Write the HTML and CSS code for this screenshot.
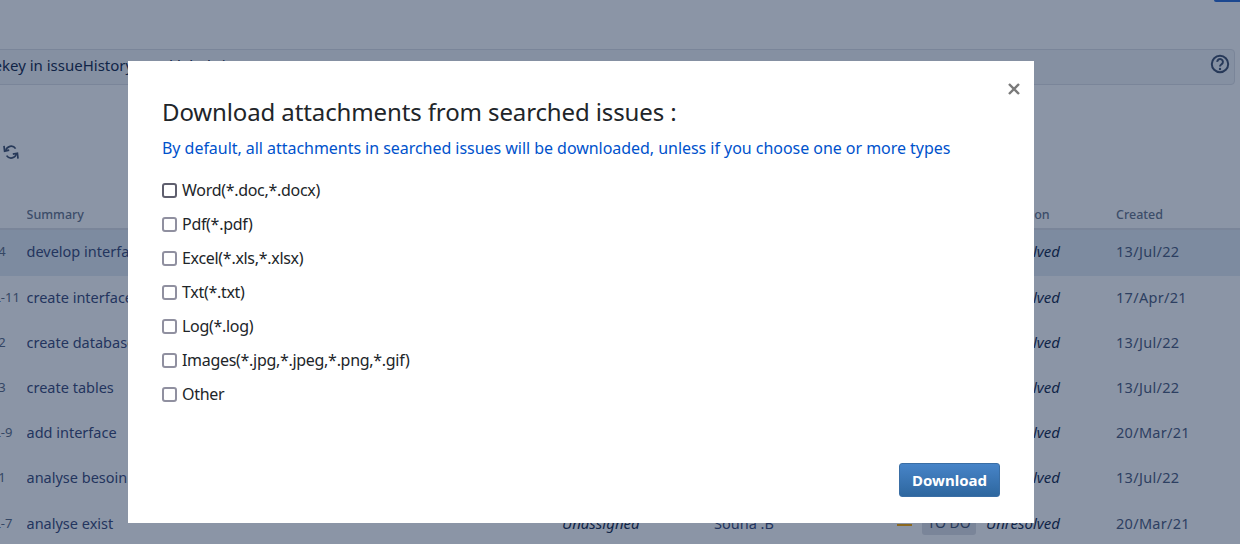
FILE: index.html
```html
<!DOCTYPE html>
<html lang="en">
<head>
<meta charset="utf-8">
<title>Issues</title>
<link rel="stylesheet" href="styles.css">
</head>
<body>
<main class="page">
  <div class="top-bar"><span class="top-button"></span></div>
  <div class="query">
    <span class="query-text">issuekey in issueHistory() and labels is not empty</span>
    <svg class="help" viewBox="0 0 20 20" width="20" height="20" aria-hidden="true">
      <circle cx="10" cy="10" r="8.2" fill="none" stroke="currentColor" stroke-width="2"/>
      <path d="M7.3 7.9a2.8 2.8 0 1 1 4.4 2.2c-1 .7-1.7 1.1-1.7 2.3" fill="none" stroke="currentColor" stroke-width="2"/>
      <circle cx="10" cy="15" r="1.2" fill="currentColor"/>
    </svg>
  </div>
  <div class="tools">
    <svg class="refresh" viewBox="0 0 16 16" width="16" height="16" aria-hidden="true">
      <path d="M2.8 6.6A5.4 5.4 0 0 1 12.6 4.6" fill="none" stroke="currentColor" stroke-width="1.7"/>
      <path d="M1 1.8l.6 5.4 4.6-1" fill="none" stroke="currentColor" stroke-width="1.7"/>
      <path d="M13.4 9.6A5.4 5.4 0 0 1 3.6 11.6" fill="none" stroke="currentColor" stroke-width="1.7"/>
      <path d="M15 14.6l-.6-5.4-4.6 1" fill="none" stroke="currentColor" stroke-width="1.7"/>
    </svg>
  </div>
  <div class="table">
    <div class="row head"><span>Key</span><span>Summary</span><span>Assignee</span><span>Reporter</span><span>P</span><span>Status</span><span>Resolution</span><span>Created</span></div>
    <div class="row selected"><span class="key">SP-4</span><span>develop interface</span><i>Unassigned</i><span>Souna .B</span><span class="prio"></span><span class="status">TO DO</span><i>Unresolved</i><span class="date">13/Jul/22</span></div>
    <div class="row"><span class="key">SPL-11</span><span>create interface</span><i>Unassigned</i><span>Souna .B</span><span class="prio"></span><span class="status">TO DO</span><i>Unresolved</i><span class="date">17/Apr/21</span></div>
    <div class="row"><span class="key">SP-2</span><span>create database</span><i>Unassigned</i><span>Souna .B</span><span class="prio"></span><span class="status">TO DO</span><i>Unresolved</i><span class="date">13/Jul/22</span></div>
    <div class="row"><span class="key">SP-3</span><span>create tables</span><i>Unassigned</i><span>Souna .B</span><span class="prio"></span><span class="status">TO DO</span><i>Unresolved</i><span class="date">13/Jul/22</span></div>
    <div class="row"><span class="key">SPL-9</span><span>add interface</span><i>Unassigned</i><span>Souna .B</span><span class="prio"></span><span class="status">TO DO</span><i>Unresolved</i><span class="date">20/Mar/21</span></div>
    <div class="row"><span class="key">SP-1</span><span>analyse besoin</span><i>Unassigned</i><span>Souna .B</span><span class="prio"></span><span class="status">TO DO</span><i>Unresolved</i><span class="date">13/Jul/22</span></div>
    <div class="row"><span class="key">SPL-7</span><span>analyse exist</span><i>Unassigned</i><span>Souna .B</span><span class="prio"></span><span class="status">TO DO</span><i>Unresolved</i><span class="date">20/Mar/21</span></div>
  </div>
</main>
<div class="backdrop"></div>
<section class="modal">
  <button class="close" type="button" aria-label="Close">
    <svg viewBox="0 0 12 12" width="12" height="12" aria-hidden="true"><path d="M1 1l10 10M11 1L1 11" stroke="currentColor" stroke-width="2.4" fill="none"/></svg>
  </button>
  <h2 class="title">Download attachments from searched issues :</h2>
  <p class="hint">By default, all attachments in searched issues will be downloaded, unless if you choose one or more types</p>
  <ul class="types">
    <li><label><span class="box box-focus"></span>Word(*.doc,*.docx)</label></li>
    <li><label><span class="box"></span>Pdf(*.pdf)</label></li>
    <li><label><span class="box"></span>Excel(*.xls,*.xlsx)</label></li>
    <li><label><span class="box"></span>Txt(*.txt)</label></li>
    <li><label><span class="box"></span>Log(*.log)</label></li>
    <li><label><span class="box"></span>Images(*.jpg,*.jpeg,*.png,*.gif)</label></li>
    <li><label><span class="box"></span>Other</label></li>
  </ul>
  <div class="actions"><button class="download" type="button">Download</button></div>
</section>
</body>
</html>
```
FILE: styles.css
```css
* { box-sizing: border-box; }
html, body { margin: 0; height: 100%; overflow: hidden; }
body {
  background: #fff;
  font-family: "Noto Sans", "Open Sans", sans-serif;
  color: #172b4d;
  font-size: 14px;
}
.page { width: 1320px; margin-left: -45px; }
.top-bar { height: 49px; display: flex; justify-content: flex-end; }
.top-button { width: 61px; height: 2px; background: #2f6fd6; border-radius: 0 0 3px 3px; }
.query {
  height: 36px;
  margin-right: 40px;
  border: 1px solid #dfe1e6;
  border-radius: 4px;
  background: #f4f5f7;
  display: flex;
  align-items: center;
  justify-content: space-between;
  padding: 0 4px 4px 10px;
  font-size: 15px;
  color: #172b4d;
}
.help { color: #42526e; margin-bottom: 2px; }
.tools { height: 115px; padding: 59px 0 0 48px; color: #42526e; }
.table { display: grid; }
.row {
  display: grid;
  grid-template-columns: 71.5px 535.5px 152px 183px 25px 64px 130px 1fr;
  align-items: center;
  height: 45.2px;
  padding-bottom: 4px;
  color: #3b4a78;
  font-size: 14.5px;
  white-space: nowrap;
}
.row > * { overflow: hidden; }
.row i { color: #172b4d; font-size: 15px; }
.head { height: 30px; padding: 1px 0 0; color: #6b778c; font-size: 12.5px; font-weight: 500; border-bottom: 2px solid #dfe1e6; }
.selected { background: #e4edf3; height: 46px; }
.key { padding-left: 24px; font-size: 13px; color: #5e6c84; }
.date { color: #4f5d7d; letter-spacing: .3px; }
.prio { height: 2px; background: #ffab00; width: 15px; margin-top: 4px; }
.status { background: #dfe1e6; border-radius: 3px; text-align: center; font-size: 14px; line-height: 24px; height: 24px; width: 54px; color: #42526e; }
.backdrop { position: fixed; inset: 0; background: rgba(9, 30, 66, .47); }
.modal {
  position: fixed;
  left: 128px;
  top: 61px;
  width: 906px;
  height: 462px;
  background: #fff;
  padding: 36px 34px 26px;
  display: flex;
  flex-direction: column;
}
.close {
  position: absolute;
  right: 14px;
  top: 22px;
  width: 12px;
  height: 12px;
  padding: 0;
  border: 0;
  background: none;
  color: #7a7a7a;
  display: flex;
}
.title { margin: 0; font-size: 24px; line-height: 30px; font-weight: 400; color: #212529; letter-spacing: -.12px; }
.hint { margin: 9px 0 0; font-size: 16px; line-height: 24px; color: #0052cc; letter-spacing: -.04px; }
.types { list-style: none; margin: 13px 0 0; padding: 0; }
.types li { height: 34px; display: flex; align-items: center; }
.types label { display: flex; align-items: center; font-size: 16px; color: #212529; letter-spacing: -.3px; }
.box { width: 15px; height: 15px; margin-right: 5px; border: 2px solid #9090a0; border-radius: 3px; background: #fff; }
.box-focus { border-color: #5f5f6e; }
.actions { margin-top: auto; display: flex; justify-content: flex-end; }
.download {
  width: 101px;
  height: 34px;
  border: 1px solid #3a6ea5;
  border-radius: 3px;
  background: linear-gradient(#4784c8, #2e679f);
  color: #fff;
  font: 700 15px "Noto Sans", "Open Sans", sans-serif;
  padding: 0;
}
```
